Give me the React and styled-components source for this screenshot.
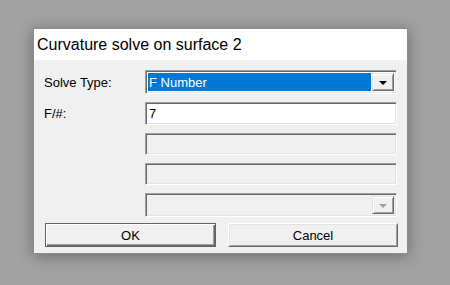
import React, { useState } from 'react';
import styled, { createGlobalStyle } from 'styled-components';

const GlobalStyle = createGlobalStyle`
  html, body {
    margin: 0;
    padding: 0;
    background: #a2a2a2;
  }
  #root {
    width: 450px;
    height: 285px;
  }
`;

const Backdrop = styled.div`
  width: 450px;
  height: 285px;
  box-sizing: border-box;
  padding: 28px 0 0 33px;
  background: #a2a2a2;
`;

const Dialog = styled.div`
  width: 375px;
  height: 226px;
  box-sizing: border-box;
  background: #f0f0f0;
  border: 1px solid #8c8c8c;
  box-shadow: 0 2px 14px rgba(0, 0, 0, 0.35);
  display: flex;
  flex-direction: column;
  font-family: "Liberation Sans", Arial, sans-serif;
`;

const TitleBar = styled.div`
  height: 31px;
  background: #fff;
  display: flex;
  align-items: center;
  padding-left: 3px;
  font-size: 16px;
  color: #000;
`;

const Body = styled.div`
  display: grid;
  grid-template-columns: 101px 252px;
  row-gap: 8px;
  padding: 10px 0 0 10px;
  font-size: 13px;
`;

const Label = styled.div`
  display: flex;
  align-items: center;
  color: #000;
`;

const Sunken = styled.div`
  box-sizing: border-box;
  height: ${p => p.$h || 22}px;
  background: ${p => (p.$disabled ? '#f0f0f0' : '#fff')};
  border-top: 1px solid #a0a0a0;
  border-left: 1px solid #a0a0a0;
  border-right: 1px solid #fff;
  border-bottom: 1px solid #fff;
  box-shadow: inset 1px 1px 0 #696969, inset -1px -1px 0 #e3e3e3;
  display: flex;
  align-items: stretch;
  padding: 2px;
  grid-column: 2;
`;

const Selected = styled.div`
  flex: 1;
  background: #0078d7;
  color: #fff;
  display: flex;
  align-items: center;
  padding-left: 1px;
  margin-right: 1px;
`;

const Value = styled.div`
  flex: 1;
  display: flex;
  align-items: center;
  padding-left: 1px;
  color: #000;
`;

const Filler = styled.div`
  flex: 1;
`;

const ArrowButton = styled.div`
  width: 22px;
  box-sizing: border-box;
  background: #f0f0f0;
  border-top: 1px solid #e3e3e3;
  border-left: 1px solid #e3e3e3;
  border-right: 1px solid #696969;
  border-bottom: 1px solid #696969;
  box-shadow: inset 1px 1px 0 #fff, inset -1px -1px 0 #a0a0a0;
  display: flex;
  align-items: center;
  justify-content: center;
`;

const Triangle = styled.div`
  width: 0;
  height: 0;
  border-left: 4px solid transparent;
  border-right: 4px solid transparent;
  border-top: 4px solid ${p => (p.$disabled ? '#a0a0a0' : '#000')};
  margin-top: 1px;
`;

const Buttons = styled.div`
  grid-column: 1 / span 2;
  display: grid;
  grid-template-columns: 171px 170px;
  column-gap: 12px;
  margin: -2px 0 0 1px;
`;

const Button = styled.button`
  height: 24px;
  box-sizing: border-box;
  padding: 0;
  background: #f0f0f0;
  font-family: "Liberation Sans", Arial, sans-serif;
  font-size: 13px;
  color: #000;
  border-top: 1px solid ${p => (p.$default ? '#646464' : '#fff')};
  border-left: 1px solid ${p => (p.$default ? '#646464' : '#fff')};
  border-right: 1px solid ${p => (p.$default ? '#646464' : '#696969')};
  border-bottom: 1px solid ${p => (p.$default ? '#646464' : '#696969')};
  box-shadow: ${p =>
    p.$default
      ? 'inset 1px 1px 0 #fff, inset -1px -1px 0 #696969, inset -2px -2px 0 #a0a0a0'
      : 'inset 1px 1px 0 #e3e3e3, inset -1px -1px 0 #a0a0a0'};
  outline: none;
`;

export default function App() {
  const [fnum] = useState('7');

  return (
    <>
      <GlobalStyle />
      <Backdrop>
        <Dialog>
          <TitleBar>Curvature solve on surface 2</TitleBar>
          <Body>
            <Label>Solve Type:</Label>
            <Sunken $h={24}>
              <Selected>F Number</Selected>
              <ArrowButton>
                <Triangle />
              </ArrowButton>
            </Sunken>

            <Label>F/#:</Label>
            <Sunken $h={23}>
              <Value>{fnum}</Value>
            </Sunken>

            <Sunken $disabled>
              <Filler />
            </Sunken>

            <Sunken $disabled>
              <Filler />
            </Sunken>

            <Sunken $disabled $h={24}>
              <Filler />
              <ArrowButton>
                <Triangle $disabled />
              </ArrowButton>
            </Sunken>

            <Buttons>
              <Button $default>OK</Button>
              <Button>Cancel</Button>
            </Buttons>
          </Body>
        </Dialog>
      </Backdrop>
    </>
  );
}
